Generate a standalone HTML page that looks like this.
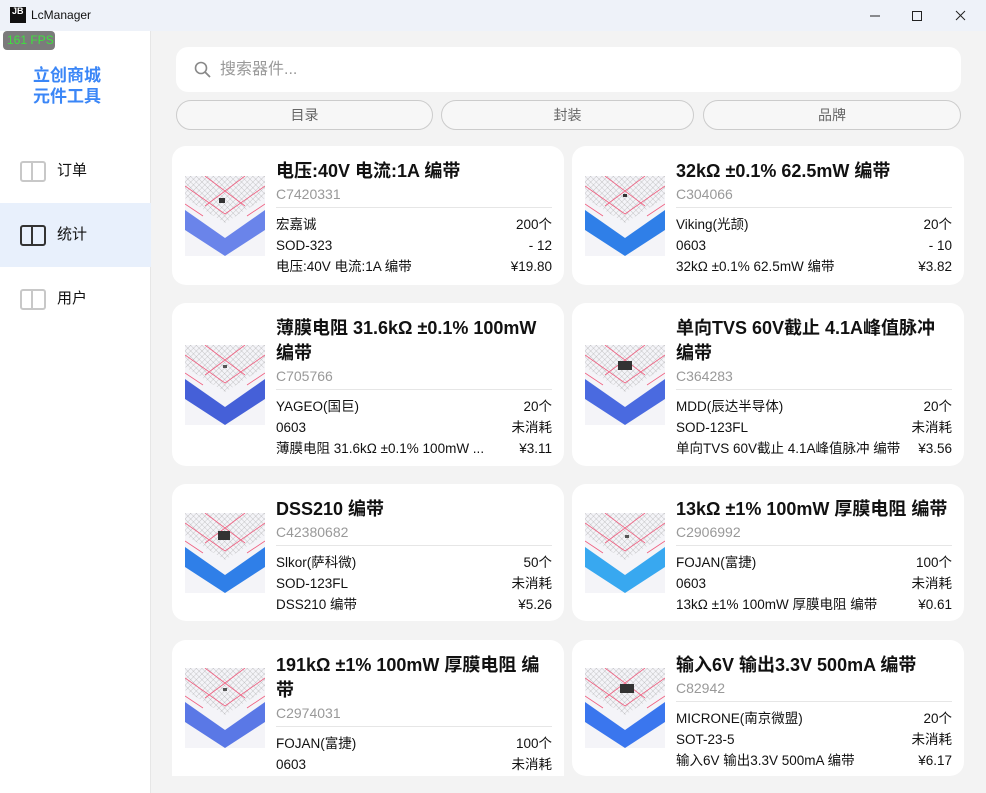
<!DOCTYPE html>
<html><head><meta charset="utf-8"><style>
*{box-sizing:border-box;margin:0;padding:0}
body{width:986px;height:793px;overflow:hidden;font-family:"Liberation Sans","Noto Sans CJK SC",sans-serif;background:#f3f3f3;position:relative;color:#111}
.tb{position:absolute;left:0;top:0;width:986px;height:31px;background:#eef2f9}
.side{position:absolute;left:0;top:31px;width:151px;height:762px;background:#fff;border-right:1px solid #e6e6e6}
.fps{position:absolute;left:3px;top:31px;width:52px;height:19px;background:#7b7b7b;border-radius:4px;color:#3ee03e;font-size:12px;line-height:19px;padding-left:4px}
.logo{position:absolute;left:33px;top:65px;color:#3a86f7;font-weight:bold;font-size:17px;line-height:21px}
.nav{position:absolute;left:0;width:151px;height:64px;font-size:15px;line-height:64px;padding-left:57px}
.nav .ic{position:absolute;left:20px;top:22px;width:26px;height:21px;border:2px solid #c8c8c8;border-radius:3px}
.nav .ic:after{content:"";position:absolute;left:9px;top:0;width:2px;height:17px;background:#c8c8c8}
.nav.sel{background:#e8f0fc}.nav.sel .ic,.nav.sel .ic:after{border-color:#333}.nav.sel .ic:after{background:#333}
.search{position:absolute;left:176px;top:47px;width:785px;height:45px;background:#fff;border-radius:12px;font-size:16px;color:#999;line-height:45px;padding-left:44px}
.btn{position:absolute;top:100px;height:30px;border:1px solid #ccc;border-radius:15px;background:#f7f7f7;text-align:center;line-height:28px;font-size:14px;color:#666}
.card{position:absolute;background:#fff;border-radius:14px;width:392px;overflow:hidden}
.card svg{position:absolute;left:13px;top:50%;margin-top:-40px}
.tx{position:absolute;left:104px;right:12px;top:13px}
.t{font-size:18px;font-weight:bold;line-height:25px}
.c{font-size:14px;color:#999;line-height:20px;border-bottom:1px solid #e6e6e6;padding-bottom:3px;margin-bottom:6px}
.r{display:flex;justify-content:space-between;font-size:13.5px;line-height:21px}
.r div:last-child{text-align:right}
</style></head><body>
<div class="tb">
<div style="position:absolute;left:10px;top:7px;width:16px;height:16px;background:#111;color:#fff;font-size:9px;font-weight:bold;line-height:9px;padding-left:2px">JB</div>
<div style="position:absolute;left:31px;top:8px;font-size:12px">LcManager</div>
<svg style="position:absolute;left:860px;top:8px" width="120" height="16"><path d="M10 8h10" stroke="#222"/><path d="M52.5 3.5h9v9h-9z" fill="none" stroke="#222"/><path d="M96 3l9 9M105 3l-9 9" stroke="#222"/></svg>
</div>
<div class="side">
</div>
<div class="fps">161 FPS</div>
<div class="logo">立创商城<br>元件工具</div>
<div class="nav" style="top:139px"><span class="ic"></span>订单</div>
<div class="nav sel" style="top:203px"><span class="ic"></span>统计</div>
<div class="nav" style="top:267px"><span class="ic"></span>用户</div>
<div class="search"><svg style="position:absolute;left:18px;top:14px" width="18" height="18"><circle cx="7" cy="7" r="5.5" fill="none" stroke="#888" stroke-width="1.6"/><path d="M11 11l5 5" stroke="#888" stroke-width="1.8"/></svg>搜索器件...</div>
<div class="btn" style="left:176px;width:257px">目录</div>
<div class="btn" style="left:441px;width:253px">封装</div>
<div class="btn" style="left:703px;width:258px">品牌</div>

<svg width="0" height="0" style="position:absolute"><defs>
<pattern id="g" width="4" height="4" patternUnits="userSpaceOnUse" patternTransform="rotate(45)"><path d="M0 0h4M0 0v4" stroke="#999" stroke-width=".5"/></pattern>
<g id="img"><rect width="80" height="80" fill="#f4f4f8"/><path d="M0 0H80V22L40 47L0 22Z" fill="url(#g)"/><path d="M0 10L40 38L80 10M0 28L18 40M62 40L80 28M20 0L60 30M60 0L20 30" stroke="#f06080" stroke-width=".8" fill="none"/></g>
</defs></svg>

<div class="card" style="left:172px;top:146px;height:139px"><svg width="80" height="80"><use href="#img"/><path d="M0 34L40 62L80 34V54L40 80L0 54Z" fill="#6a84ea"/><rect x="34" y="22" width="6" height="5" fill="#333"/></svg>
<div class="tx"><div class="t">电压:40V 电流:1A 编带</div><div class="c">C7420331</div>
<div class="r"><div>宏嘉诚<br>SOD-323<br>电压:40V 电流:1A 编带</div><div>200个<br>- 12<br>¥19.80</div></div></div></div>

<div class="card" style="left:572px;top:146px;height:139px"><svg width="80" height="80"><use href="#img"/><path d="M0 34L40 62L80 34V54L40 80L0 54Z" fill="#2f7fe8"/><rect x="38" y="18" width="4" height="3" fill="#333"/></svg>
<div class="tx"><div class="t">32kΩ ±0.1% 62.5mW 编带</div><div class="c">C304066</div>
<div class="r"><div>Viking(光颉)<br>0603<br>32kΩ ±0.1% 62.5mW 编带</div><div>20个<br>- 10<br>¥3.82</div></div></div></div>

<div class="card" style="left:172px;top:303px;height:163px"><svg width="80" height="80"><use href="#img"/><path d="M0 34L40 62L80 34V54L40 80L0 54Z" fill="#4560d8"/><rect x="38" y="20" width="4" height="3" fill="#555"/></svg>
<div class="tx"><div class="t">薄膜电阻 31.6kΩ ±0.1% 100mW<br>编带</div><div class="c">C705766</div>
<div class="r"><div>YAGEO(国巨)<br>0603<br>薄膜电阻 31.6kΩ ±0.1% 100mW ...</div><div>20个<br>未消耗<br>¥3.11</div></div></div></div>

<div class="card" style="left:572px;top:303px;height:163px"><svg width="80" height="80"><use href="#img"/><path d="M0 34L40 62L80 34V54L40 80L0 54Z" fill="#4a6ae0"/><rect x="33" y="16" width="14" height="9" fill="#333"/></svg>
<div class="tx"><div class="t">单向TVS 60V截止 4.1A峰值脉冲<br>编带</div><div class="c">C364283</div>
<div class="r"><div>MDD(辰达半导体)<br>SOD-123FL<br>单向TVS 60V截止 4.1A峰值脉冲 编带</div><div>20个<br>未消耗<br>¥3.56</div></div></div></div>

<div class="card" style="left:172px;top:484px;height:137px"><svg width="80" height="80"><use href="#img"/><path d="M0 34L40 62L80 34V54L40 80L0 54Z" fill="#2f7fe8"/><rect x="33" y="18" width="12" height="9" fill="#333"/></svg>
<div class="tx"><div class="t">DSS210 编带</div><div class="c">C42380682</div>
<div class="r"><div>Slkor(萨科微)<br>SOD-123FL<br>DSS210 编带</div><div>50个<br>未消耗<br>¥5.26</div></div></div></div>

<div class="card" style="left:572px;top:484px;height:137px"><svg width="80" height="80"><use href="#img"/><path d="M0 34L40 62L80 34V54L40 80L0 54Z" fill="#38a8f0"/><rect x="40" y="22" width="4" height="3" fill="#555"/></svg>
<div class="tx"><div class="t">13kΩ ±1% 100mW 厚膜电阻 编带</div><div class="c">C2906992</div>
<div class="r"><div>FOJAN(富捷)<br>0603<br>13kΩ ±1% 100mW 厚膜电阻 编带</div><div>100个<br>未消耗<br>¥0.61</div></div></div></div>

<div class="card" style="left:172px;top:640px;height:136px;border-radius:14px 14px 0 0"><svg width="80" height="80"><use href="#img"/><path d="M0 34L40 62L80 34V54L40 80L0 54Z" fill="#5a78e6"/><rect x="38" y="20" width="4" height="3" fill="#555"/></svg>
<div class="tx"><div class="t">191kΩ ±1% 100mW 厚膜电阻 编<br>带</div><div class="c">C2974031</div>
<div class="r"><div>FOJAN(富捷)<br>0603<br>191kΩ ±1% 100mW 厚膜电阻 编带</div><div>100个<br>未消耗<br>¥0.56</div></div></div></div>

<div class="card" style="left:572px;top:640px;height:136px"><svg width="80" height="80"><use href="#img"/><path d="M0 34L40 62L80 34V54L40 80L0 54Z" fill="#3a76ee"/><rect x="35" y="16" width="14" height="9" fill="#333"/></svg>
<div class="tx"><div class="t">输入6V 输出3.3V 500mA 编带</div><div class="c">C82942</div>
<div class="r"><div>MICRONE(南京微盟)<br>SOT-23-5<br>输入6V 输出3.3V 500mA 编带</div><div>20个<br>未消耗<br>¥6.17</div></div></div></div>
<div style="position:absolute;left:152px;top:776px;width:834px;height:17px;background:#f3f3f3"></div>
</body></html>
